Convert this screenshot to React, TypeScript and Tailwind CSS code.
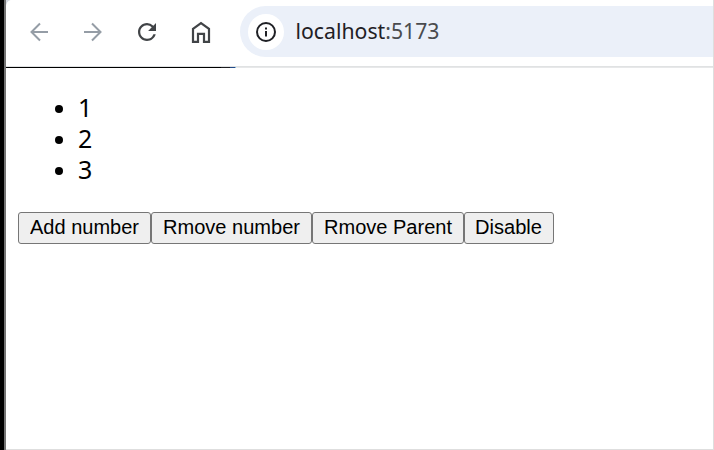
import React from "react";

const buttons = [
  { label: "Add number", size: "w-[133px]", text: "w-[110px]", len: 109 },
  { label: "Rmove number", size: "w-[161px]", text: "w-[138px]", len: 137 },
  { label: "Rmove Parent", size: "w-[152px]", text: "w-[129px]", len: 128 },
  { label: "Disable", size: "w-[90px]", text: "w-[68px]", len: 67 },
];

function Toolbar() {
  return (
    <header className="flex h-[66px] shrink-0 items-start">
      <svg width="234" height="66" viewBox="6 0 234 66" fill="none" className="shrink-0">
        <path d="M6 0h4.500Q6 1.500 6 7Z" fill="#d5d9e0" />
        <g stroke="#959da6" strokeWidth="2">
          <path d="M48 32H32M40 23.500L31.500 32L40 40.500" />
          <path d="M84 32h16M92 23.500L100.500 32L92 40.500" />
        </g>
        <path
          transform="translate(133.500 18.500) scale(1.125)"
          d="M17.650 6.350A7.958 7.958 0 0 0 12 4c-4.420 0-7.990 3.580-7.990 8s3.570 8 7.990 8c3.730 0 6.840-2.550 7.730-6h-2.080A5.990 5.990 0 0 1 12 18c-3.310 0-6-2.690-6-6s2.690-6 6-6c1.660 0 3.140.690 4.220 1.780L13 11h7V4l-2.350 2.350z"
          fill="#414447"
        />
        <path
          d="M193 28.800L201 23l8 5.800V41.800h-5v-8h-6v8h-5Z"
          stroke="#414447"
          strokeWidth="2.200"
        />
      </svg>
      <div className="mt-[6px] flex h-[51px] flex-1 items-center rounded-l-full bg-[#ebf0f9]">
        <div className="ml-[8px] flex h-[36px] w-[36px] items-center justify-center rounded-full bg-white">
          <svg width="20" height="20" viewBox="0 0 20 20" fill="none" stroke="#1f2025" strokeWidth="2">
            <circle cx="10" cy="10" r="9" />
            <path d="M10 9v5.500M10 5.500v2" />
          </svg>
        </div>
        <svg width="148" height="36" className="ml-[11px] font-['Noto_Sans',sans-serif] text-[22px]">
          <text x="0.5" y="25" textLength="144" lengthAdjust="spacingAndGlyphs" fill="#1f2025">
            localhost<tspan fill="#494b4e">:5173</tspan>
          </text>
        </svg>
      </div>
    </header>
  );
}

export default function App() {
  return (
    <div className="flex h-[450px] w-[714px] overflow-hidden bg-white text-black">
      <div className="w-[6px] shrink-0 border-r-2 border-[#747474] bg-black" />
      <div className="flex min-w-0 flex-1 flex-col border-r border-b border-[#dedede]">
        <Toolbar />
        <div className="flex h-[2px] shrink-0 flex-col">
          <div className="h-px bg-[#e0e2e3]" />
          <div className="flex h-px bg-[#e7e8e9]">
            <div className="w-[215px] bg-black" />
            <div className="w-[9px] bg-[#1c1d20]" />
            <div className="w-[5px] bg-[#234a86]" />
            <div className="w-px bg-[#7ab0d8]" />
          </div>
        </div>
        <main className="flex flex-1 flex-col pt-[25px] pl-[12px]">
          <ul className="flex flex-col pl-[37px] font-['Noto_Sans',sans-serif] text-[25px] leading-[29px]">
            {[1, 2, 3].map((n) => (
              <li key={n} className="flex h-[31px] items-center">
                <span className="mr-[15px] h-[8px] w-[8px] rounded-full bg-black" />
                <span className="pb-[2px]">{n}</span>
              </li>
            ))}
          </ul>
          <div className="mt-[26px] flex font-['Liberation_Sans',sans-serif] text-[20px]">
            {buttons.map((b) => (
              <button
                key={b.label}
                className={`${b.size} flex h-[32px] items-center justify-center rounded-[3px] border border-[#767676] bg-[#efefef]`}
              >
                <svg height="30" className={b.text}>
                  <text x="0" y="21" textLength={b.len} lengthAdjust="spacingAndGlyphs" fill="black">
                    {b.label}
                  </text>
                </svg>
              </button>
            ))}
          </div>
        </main>
      </div>
    </div>
  );
}
